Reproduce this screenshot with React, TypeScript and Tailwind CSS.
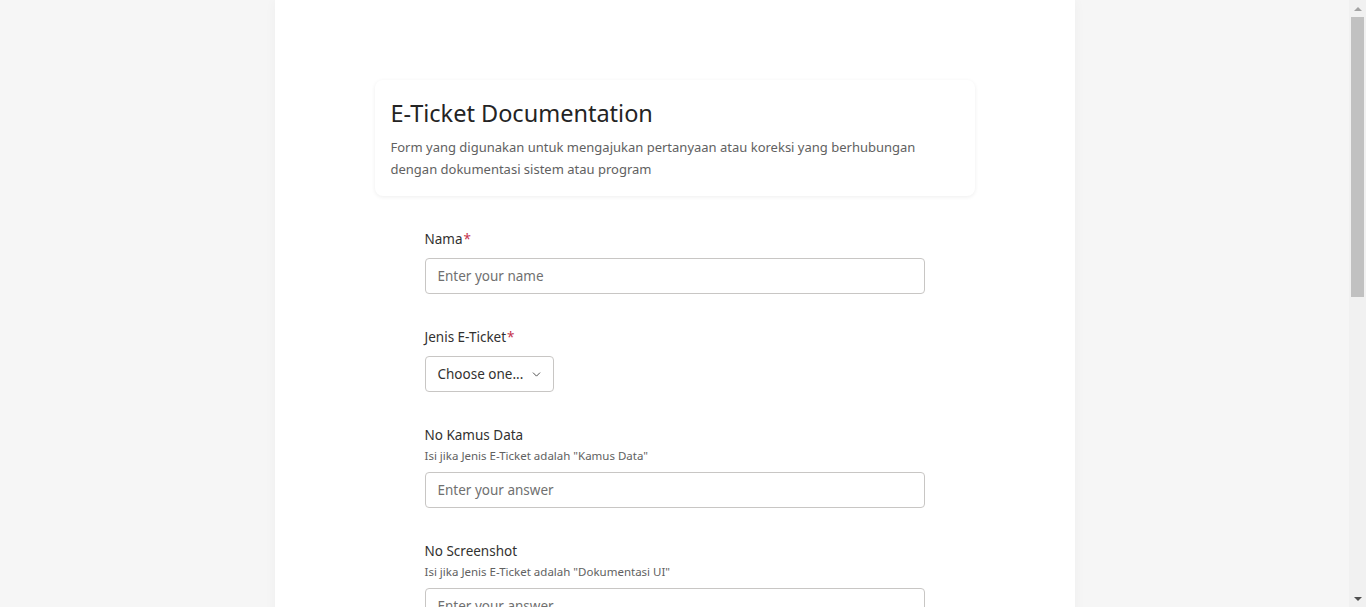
import { ChevronDown } from "lucide-react";

const inputClass =
  "h-9 w-full rounded border border-[#c8c6c4] bg-white px-3 text-[13.5px] text-[#323130] placeholder:text-[#707070] focus:outline-none";

function Label({ text, required }: { text: string; required?: boolean }) {
  return (
    <div className="text-[13.5px] leading-5 text-[#323130]">
      {text}
      {required && <span className="ml-px text-[#c4314b]">*</span>}
    </div>
  );
}

function Scrollbar() {
  return (
    <div className="flex h-screen w-[17px] shrink-0 flex-col items-center bg-[#f1f1f1]">
      <div className="flex h-[17px] w-full items-center justify-center">
        <div className="h-0 w-0 border-x-[4px] border-b-[4px] border-x-transparent border-b-[#a3a3a3]" />
      </div>
      <div className="h-[280px] w-[13px] bg-[#c1c1c1]" />
      <div className="flex-1" />
      <div className="flex h-[17px] w-full items-center justify-center">
        <div className="h-0 w-0 border-x-[4px] border-t-[4px] border-x-transparent border-t-[#505050]" />
      </div>
    </div>
  );
}

export default function App() {
  return (
    <div className="flex h-screen overflow-hidden bg-[#f6f6f6] font-['Noto_Sans','Open_Sans',sans-serif]">
      <div className="min-w-0 flex-1">
        <div className="mx-auto w-[800px] bg-white pb-24 pt-20 shadow-[0_0_12px_rgba(0,0,0,0.035)]">
          <div className="mx-auto w-[600px] rounded-lg bg-white px-4 pb-4 pt-[17px] shadow-[0_1px_4px_rgba(0,0,0,0.07)]">
            <h1 className="text-[23.5px] leading-[32px] text-[#242424]">E-Ticket Documentation</h1>
            <p className="mt-[7px] text-[13px] leading-[22px] text-[#616161]">
              Form yang digunakan untuk mengajukan pertanyaan atau koreksi yang berhubungan dengan dokumentasi sistem atau program
            </p>
          </div>

          <form className="mx-auto mt-[33px] flex w-[500px] flex-col gap-[33px]">
            <div className="flex flex-col gap-[9px]">
              <Label text="Nama" required />
              <input className={inputClass} placeholder="Enter your name" />
            </div>

            <div className="flex flex-col gap-[9px]">
              <Label text="Jenis E-Ticket" required />
              <button
                type="button"
                className="flex h-9 w-[129px] items-center gap-[7px] whitespace-nowrap rounded border border-[#c8c6c4] bg-white pl-3 text-[13.5px] text-[#323130]"
              >
                <span>Choose one...</span>
                <ChevronDown size={13} strokeWidth={1.7} className="text-[#444]" />
              </button>
            </div>

            <div className="flex flex-col">
              <Label text="No Kamus Data" />
              <div className="mt-[3px] text-[11.5px] leading-4 text-[#616161]">Isi jika Jenis E-Ticket adalah "Kamus Data"</div>
              <input className={`${inputClass} mt-[8px]`} placeholder="Enter your answer" />
            </div>

            <div className="flex flex-col">
              <Label text="No Screenshot" />
              <div className="mt-[3px] text-[11.5px] leading-4 text-[#616161]">Isi jika Jenis E-Ticket adalah "Dokumentasi UI"</div>
              <input className={`${inputClass} mt-[8px]`} placeholder="Enter your answer" />
            </div>
          </form>
        </div>
      </div>
      <Scrollbar />
    </div>
  );
}
